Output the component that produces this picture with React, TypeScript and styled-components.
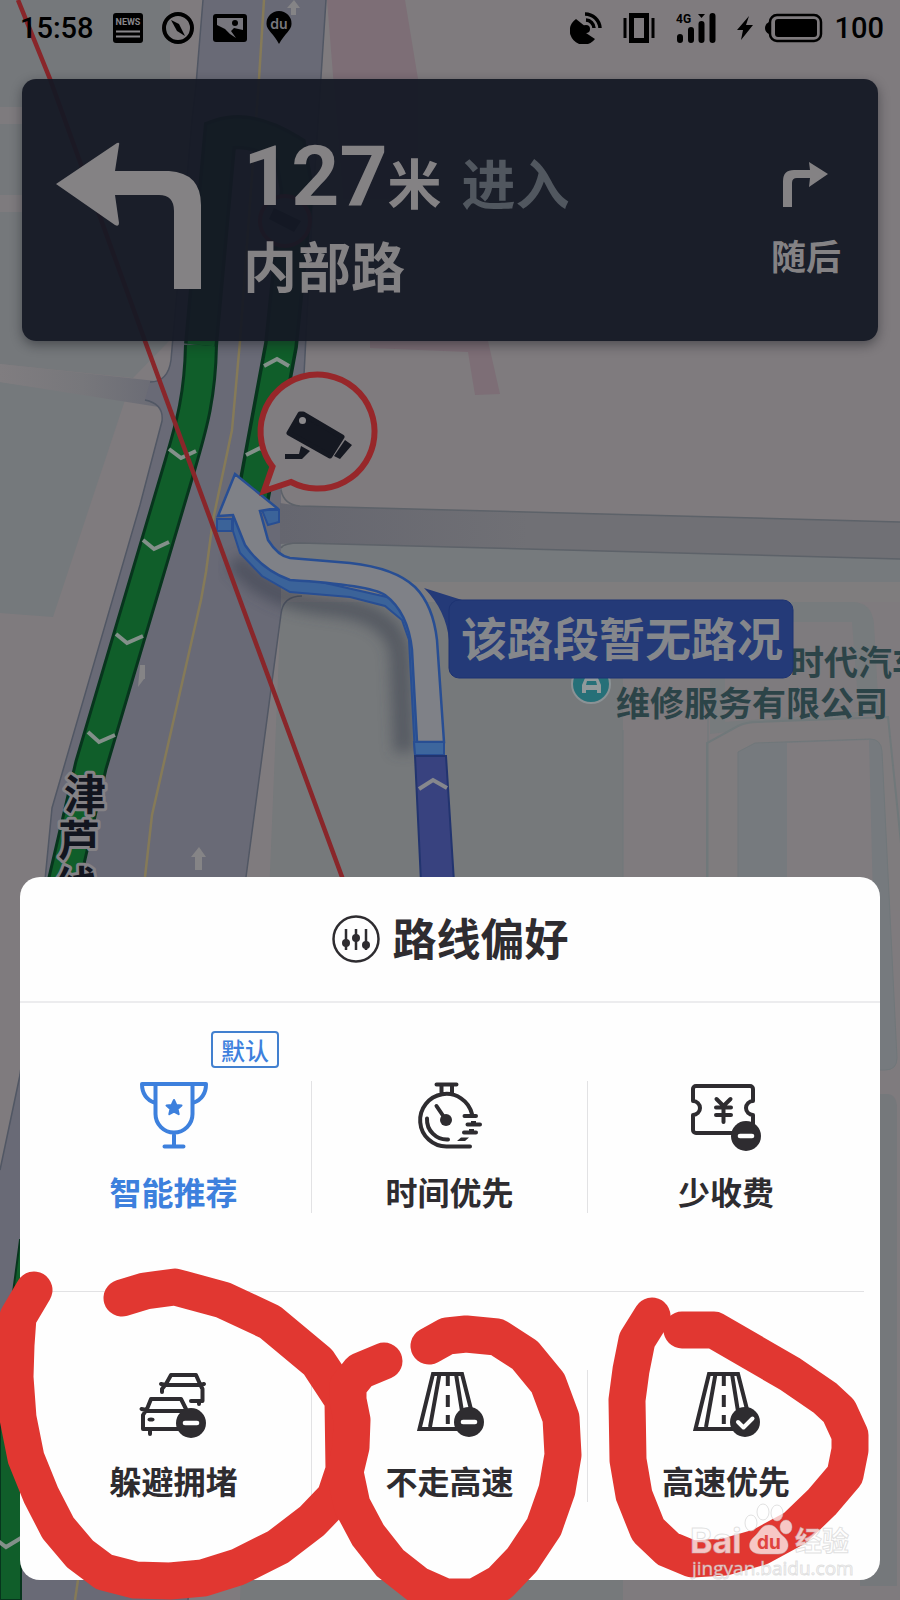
import React from "react";
import styled, { createGlobalStyle } from "styled-components";

const cjk = `"Noto Sans CJK SC", sans-serif`;

const GlobalStyle = createGlobalStyle`
  * { box-sizing: border-box; }
  body { margin: 0; background: #7f7c7f; font-family: Roboto, ${cjk}; }
`;

const Screen = styled.div`
  position: relative;
  display: flex;
  flex-direction: column;
  min-height: 100vh;
  overflow: hidden;
`;

const FullLayer = styled.svg<{ $front?: boolean }>`
  position: absolute;
  inset: 0;
  width: 100%;
  height: 100%;
  pointer-events: none;
  z-index: ${(p) => (p.$front ? 2 : 0)};
`;

const StatusBar = styled.header`
  position: relative;
  z-index: 1;
  display: flex;
  align-items: center;
  justify-content: space-between;
  height: 55px;
  padding: 0 16px 0 20px;
  color: #000;
`;

const StatusGroup = styled.div<{ $gap: number }>`
  display: flex;
  align-items: center;
  gap: ${(p) => p.$gap}px;
`;

const StatusText = styled.span`
  font-size: 29px;
  font-weight: 500;
  line-height: 32px;
`;

const Guidance = styled.section`
  position: relative;
  z-index: 1;
  display: flex;
  align-items: flex-start;
  margin: 24px 22px 0;
  padding: 0 37px 0 33px;
  height: 262px;
  border-radius: 14px;
  background: rgba(20, 24, 36, 0.94);
  box-shadow: 0 4px 12px rgba(20, 22, 28, 0.45);
  color: #848284;
  font-family: ${cjk};
  font-weight: 700;
`;

const TurnIcon = styled.svg`
  flex: none;
  margin-top: 62px;
`;

const GuidanceText = styled.div`
  flex: 1;
  margin: 56px 0 0 40px;
`;

const DistanceLine = styled.div`
  display: flex;
  align-items: baseline;
  height: 98px;
  line-height: 84px;
  font-size: 54px;
`;

const Distance = styled.span`
  font-family: Roboto, sans-serif;
  font-size: 84px;
`;

const Action = styled.span`
  margin-left: 20px;
  color: #51575f;
`;

const RoadName = styled.div`
  font-size: 54px;
  line-height: 64px;
`;

const NextTurn = styled.div`
  display: flex;
  flex-direction: column;
  align-items: center;
  gap: 28px;
  margin-top: 82px;
  font-size: 35px;
  line-height: 40px;
`;

const Sheet = styled.section`
  position: relative;
  z-index: 1;
  margin: auto 20px 20px;
  border-radius: 20px;
  background: #fefefe;
  color: #2e2c30;
  font-family: ${cjk};
`;

const SheetHeader = styled.div`
  display: flex;
  align-items: center;
  justify-content: center;
  gap: 13px;
  height: 126px;
  border-bottom: 2px solid #ececee;
`;

const SheetTitle = styled.h1`
  margin: 0;
  padding-bottom: 4px;
  font-size: 44px;
  font-weight: 700;
  line-height: 60px;
`;

const Options = styled.div`
  display: grid;
  grid-template-columns: repeat(3, 1fr);
  padding: 0 16px;
`;

const Option = styled.button<{ $topRow?: boolean; $selected?: boolean }>`
  position: relative;
  padding: 78px 0;
  border: 0;
  border-bottom: ${(p) => (p.$topRow ? "1px solid #e2e2e4" : "0")};
  background: none;
  color: ${(p) => (p.$selected ? "#3d80dd" : "inherit")};
  font: 700 32px/44px ${cjk};
`;

const OptionBody = styled.span<{ $last?: boolean }>`
  display: flex;
  flex-direction: column;
  align-items: center;
  justify-content: space-between;
  height: 132px;
  border-right: ${(p) => (p.$last ? "0" : "1px solid #e2e2e4")};
`;

const OptionIcon = styled.svg`
  width: 80px;
  height: 70px;
  fill: none;
  stroke: currentColor;
  stroke-width: 4;
  stroke-linecap: round;
  stroke-linejoin: round;
`;

const DefaultBadge = styled.span`
  position: absolute;
  top: 28px;
  right: 33px;
  padding: 0 8px;
  border: 2px solid #4280cf;
  border-radius: 4px;
  background: #fefefe;
  font-size: 24px;
  font-weight: 500;
  line-height: 33px;
`;

const Minus = ({ x, y }: { x: number; y: number }) => (
  <g>
    <circle cx={x} cy={y} r="15" fill="currentColor" stroke="none" />
    <path d={`M${x - 6} ${y}h12`} stroke="#fefefe" strokeWidth="4.6" />
  </g>
);

const Trophy = () => (
  <OptionIcon viewBox="1 0 80 70" aria-hidden>
    <path d="M9 3H73M22.500 3V33a18.500 18.500 0 0 0 37 0V3M9 3c0 10 5 16 13 19M73 3c0 10-5 16-13 19M41 52v13M31.500 65.500h19" />
    <path d="M41 19l2.300 5 5.200.6-3.900 3.500 1.100 5.100-4.700-2.600-4.700 2.600 1.100-5.100-3.900-3.500 5.200-.6z" fill="currentColor" strokeWidth="2" />
  </OptionIcon>
);

const Timer = () => (
  <OptionIcon viewBox="0 0 80 70" aria-hidden>
    <path d="M26.500 3.500h20M31.500 4v9M42 4v9M62 33A26.300 26.300 0 1 0 36.500 65.500H60M17 37.500A20 20 0 0 0 38 58.500M26.500 25L36 39M54.500 35H66M57.500 43.500H70M54 51.500H66" />
    <path d="M61 40h5v3h-5zM59 48h5v3h-5zM47 60l4-3.500h8l-4 3.500z" fill="currentColor" stroke="none" />
    <circle cx="36" cy="39" r="6" fill="currentColor" stroke="none" />
  </OptionIcon>
);

const Ticket = () => (
  <OptionIcon viewBox="0 0 80 70" aria-hidden>
    <path d="M10 5H64a3 3 0 0 1 3 3V20a7 7 0 0 0 0 14V52H10a3 3 0 0 1-3-3V34a7 7 0 0 0 0-14V8a3 3 0 0 1 3-3z" />
    <path d="M30.500 18l7 7 7-7M30 26.500H45M30 34H45M37.500 26V41" />
    <Minus x={60} y={55} />
  </OptionIcon>
);

const Cars = () => (
  <OptionIcon viewBox="1 -1 80 70" aria-hidden>
    <path d="M29 21V18L33 13 38 4H63L67 13 69.500 18V30H58M33 14H67M28 13l5 1M67 14l4-1M66 31v2" />
    <path d="M10 58V44l4-6L18 28H48l5 10M14 40H54M8.500 38l5 1M10 58H46M17 60v3" />
    <ellipse cx="18" cy="48.500" rx="3.500" ry="2" fill="currentColor" stroke="none" />
    <Minus x={58} y={52} />
  </OptionIcon>
);

const Highway = ({ check }: { check?: boolean }) => (
  <OptionIcon viewBox="0 1 80 70" aria-hidden>
    <path d="M23 5H52L66 60H9.500zM29.500 5L20 58M46 5L54.500 58" strokeLinejoin="miter" strokeLinecap="butt" />
    <path d="M37.800 4v13M37.800 26v12M37.800 46v9" strokeLinecap="butt" />
    {check ? (
      <>
        <circle cx="59" cy="53" r="15" fill="currentColor" stroke="none" />
        <path d="M52 53l5.500 5.500 9-9" stroke="#fefefe" />
      </>
    ) : (
      <Minus x={59} y={53} />
    )}
  </OptionIcon>
);

const options = [
  { label: "智能推荐", icon: <Trophy />, selected: true },
  { label: "时间优先", icon: <Timer /> },
  { label: "少收费", icon: <Ticket /> },
  { label: "躲避拥堵", icon: <Cars /> },
  { label: "不走高速", icon: <Highway /> },
  { label: "高速优先", icon: <Highway check /> },
];

const chevrons = [
  "M169 449l12 9 15-7", "M143 540l11 9 15-7", "M116 634l11 9 16-7", "M88 732l11 10 16-7",
  "M264 366l13-7 12 7", "M246 455l14-7 12 7", "M-2 1541l8 6 15-9",
];

const Map = () => (
  <FullLayer viewBox="0 0 900 1600" preserveAspectRatio="xMidYMin slice" aria-label="地图">
    <defs>
      <linearGradient id="side" x1="0" x2="1">
        <stop offset="0" stopColor="#807d80" />
        <stop offset="0.5" stopColor="#77777b" />
        <stop offset="1" stopColor="#696a74" />
      </linearGradient>
      <linearGradient id="junction" x1="0" x2="1">
        <stop offset="0" stopColor="#65666f" />
        <stop offset="0.4" stopColor="#707075" />
        <stop offset="1" stopColor="#707075" />
      </linearGradient>
      <filter id="soft"><feGaussianBlur stdDeviation="7" /></filter>
    </defs>
    <rect width="900" height="1600" fill="#7f7b7e" />
    <path d="M0 0H170V340L133 378 0 364z" fill="#75787b" />
    <path d="M0 107H200V124H0zM0 195H200V212H0z" fill="#7e7b7e" />
    <path d="M0 382l125 18-72 217-53-4z" fill="#75797c" />
    <path d="M327 0h78l13 79v120h-75zM370 341H488l12 53-25 1-7-43-98-4z" fill="#7d6e76" />
    <path d="M0 364L165 382V408L0 382z" fill="url(#side)" />

    <path d="M281 543L450 547 900 559V582H281z" fill="#767a7d" />
    <path d="M281 604L300 596H623V1600H240z" fill="#76797b" />
    <path d="M281 582H900V602H281z" fill="#7f7d7e" />
    <path d="M710 602H852q20 0 22 22l5 90-169 20z" fill="#777b7d" />
    <path d="M725 622H852l7 90-134 10z" fill="#7e7b7e" />
    <path d="M707 900V743l31-17q8-4 20-4l130-5 20 194" fill="#7f7c7e" stroke="#70787a" strokeWidth="2" />
    <path d="M738 900V752l17-9 115-4q11 0 12 12l15 307q0 12-12 12h-20V900" fill="#767a7e" stroke="#70777a" />
    <path d="M787 743l82-3 4 160h-86z" fill="#807c7f" />
    <path d="M623 730V877M708 690v187" stroke="#70787a" />
    <path d="M860 1094h27q9 0 10 12v480H860z" fill="#75787b" />

    <path d="M203 0L196 85 192 120 171 360Q168 382 150 382L145 400Q164 404 162 421L140 505 52 808 45 880 20 1075 0 1170V1600H188L246 877 281 614 281 494 304 375 313 200 326 0z" fill="#696a76" />
    <path d="M203 0L196 85 192 120 171 360Q168 382 150 382M145 400Q164 404 162 421L140 505 52 808 45 880 20 1075 0 1170M188 1600L246 877 281 614Q283 596 302 596M326 0L313 200 304 375" fill="none" stroke="#515764" strokeWidth="1.500" />
    <path d="M280 503L300 506 450 510 900 522V559L450 547 300 543 280 544z" fill="url(#junction)" />
    <path d="M281 490Q284 505 300 506L450 510 900 522M281 548Q284 543 300 543L450 547 900 559" fill="none" stroke="#5d6269" strokeWidth="1.500" />
    <path d="M264 0L259 79 240 341 232 430 213 520 206 572 201 600 152 815 145 877M78 1580l-3 20" fill="none" stroke="#857a58" strokeWidth="2.500" />
    <g fill="#858486">
      <path d="M294 0l6 8h-4v7h-5V8h-4zM140 665h5v14h-1l-6 8zM199 847l7 10h-4v13h-7v-13h-4z" />
    </g>

    <path d="M201 345C200 400 190 430 180 465L91 765 62 890" fill="none" stroke="#07351d" strokeWidth="34" />
    <path d="M201 345C200 400 190 430 180 465L91 765 62 890" fill="none" stroke="#105e2a" strokeWidth="28" />
    <path d="M201 345L220 135Q250 125 290 150L297 190 281 345 252 502" fill="none" stroke="#07351d" strokeWidth="34" />
    <path d="M201 345L220 135Q250 125 290 150L297 190 281 345 252 502" fill="none" stroke="#105e2a" strokeWidth="27" />
    <path d="M20 1240L0 1390V1600H21V1240z" fill="#105e2a" stroke="#07351d" strokeWidth="2" />
    <path d={chevrons.join("")} fill="none" stroke="#83908a" strokeWidth="4" />

    <path d="M235 560Q265 600 330 606T400 655L404 752" fill="none" stroke="#363b48" strokeWidth="20" opacity="0.5" filter="url(#soft)" />
    <path d="M233 515V531L240 553 262 576 290 592 350 597 385 606 402 620 409 640 415 755H430V640L400 600 290 575 255 555z" fill="#3b6399" stroke="#284e93" strokeWidth="2" />
    <path d="M217 519H232V531H217zM262 510H279V522L268 525z" fill="#3b6399" stroke="#284e93" strokeWidth="2" />
    <path d="M235 474L277 508 260 511 268 540Q278 556 290 558L350 563Q395 568 415 587 433 605 437 640L444 742H417L412 650Q408 612 385 595 370 585 290 580 262 570 245 545L233 515 218 516z" fill="#7f8187" stroke="#284e93" strokeWidth="2.500" />
    <path d="M414 742H444V755H415z" fill="#3d669d" stroke="#284e93" strokeWidth="2" />
    <path d="M415 756H446L454 882H421z" fill="#38427f" stroke="#22346f" strokeWidth="2" />
    <path d="M419 789l14-9 14 8" fill="none" stroke="#86878d" strokeWidth="4" />

    <path d="M18 0L50 79 145 341 240 600 345 885" fill="none" stroke="#89262a" strokeWidth="4.500" />
    <g>
      <circle cx="285" cy="221" r="25" fill="#555b68" stroke="#8c2630" strokeWidth="4" />
      <path d="M274 208l27 13-7 11-25-13z" fill="#111827" />
    </g>
    <path d="M272.500 466.500A57 57 0 1 1 291 482L264 491z" fill="#807d80" stroke="#97272a" strokeWidth="6" />
    <path d="M303 414L342 437 330 456 289 433 300 414z" fill="#151821" stroke="#151821" strokeWidth="5" strokeLinejoin="round" />
    <circle cx="302.500" cy="420.500" r="3.500" fill="#8b898c" />
    <path d="M345 440l7 5-12 14-6-3zM301 446l9 5-8 8h-17v-5h14z" fill="#151821" />

    <path d="M424 588L462 600V636L449 640Q446 610 424 588z" fill="#243a78" />
    <g fontFamily={cjk} fontWeight="700" fontSize="34" fill="#2c4448">
      <text x="790" y="675">时代汽车</text>
      <text x="616" y="716">维修服务有限公司</text>
    </g>
    <circle cx="591" cy="684" r="19" fill="#267078" stroke="#8b9295" strokeWidth="2" />
    <path d="M582 693v-8l3-7h13l3 7v8h-4v-3H586v3zM587 681l-1 4h11l-1-4z" fill="#91999b" fillRule="evenodd" />
    <rect x="449" y="600" width="344" height="78" rx="10" fill="#243a78" stroke="#1d3372" />
    <text x="461" y="656" fontFamily={cjk} fontWeight="700" fontSize="46" fill="#85878b">该路段暂无路况</text>

    <g fontFamily={cjk} fontWeight="700" fontSize="42" fill="#12151f" stroke="#848286" strokeWidth="6" strokeLinejoin="round" paintOrder="stroke" textAnchor="middle">
      <text x="85" y="810">津</text>
      <text x="79" y="856">芦</text>
      <text x="76" y="902">线</text>
    </g>
  </FullLayer>
);

const Annotations = () => (
  <FullLayer $front viewBox="0 0 900 1600" preserveAspectRatio="xMidYMax slice" aria-hidden>
    <g fill="none" stroke="#e13731" strokeWidth="37" strokeLinecap="round" strokeLinejoin="round">
      <path d="M34 1290L18 1317 16 1345 15 1377 18 1418 26 1458 41 1495 58 1528 80 1554 104 1572 135 1580 170 1581 203 1578 238 1567 278 1547 312 1521 335 1497 344 1470 343 1400 318 1362 270 1322 223 1300 175 1287 145 1291 122 1298" />
      <path d="M384 1361L360 1371 348 1386 348 1400 352 1420 351 1447 345 1472 352 1505 368 1535 390 1563 418 1585 445 1597 475 1597 500 1583 522 1560 544 1527 557 1490 563 1455 561 1418 548 1383 525 1355 497 1337 466 1334 447 1336 429 1346" />
      <path d="M652 1316L637 1340 631 1370 627 1400 628 1460 634 1495 648 1530 668 1549 692 1559 725 1557 760 1547 795 1528 822 1502 845 1475 850 1450 850 1435 839 1411 825 1398 790 1374 714 1330 682 1330" />
    </g>
    <g fill="#fff" fillOpacity="0.72" stroke="#bdbdbd" strokeOpacity="0.45" strokeWidth="1">
      <text x="690" y="1553" fontFamily="Inter, sans-serif" fontWeight="700" fontSize="34">Bai</text>
      <ellipse cx="751" cy="1523" rx="6" ry="8" />
      <ellipse cx="763" cy="1512" rx="6" ry="8" />
      <ellipse cx="777" cy="1513" rx="6" ry="8" />
      <ellipse cx="786" cy="1527" rx="6" ry="7" />
      <path d="M769 1525c8 0 9 8 15 12 7 6 5 17-6 17H761c-12 0-15-10-7-17 6-5 7-12 15-12z" />
      <text x="795" y="1551" fontFamily={cjk} fontWeight="700" fontSize="27">经验</text>
      <text x="692" y="1575" fontFamily="Open Sans, sans-serif" fontSize="19">jingyan.baidu.com</text>
    </g>
    <text x="757" y="1549" fontFamily="Inter, sans-serif" fontWeight="700" fontSize="19" fill="#e0443e">du</text>
  </FullLayer>
);

export default function App() {
  return (
    <>
      <GlobalStyle />
      <Screen>
        <Map />
        <StatusBar>
          <StatusGroup $gap={19}>
            <StatusText>15:58</StatusText>
            <svg width="30" height="30" viewBox="0 0 30 30" aria-hidden>
              <rect width="30" height="30" rx="3" />
              <text x="15" y="12" textAnchor="middle" fontSize="9" fontWeight="700" fill="#88868a" fontFamily="Roboto, sans-serif">NEWS</text>
              <path d="M3 18.500h24M3 23.500h24" stroke="#88868a" strokeWidth="2" />
            </svg>
            <svg width="32" height="32" viewBox="0 0 32 32" aria-hidden>
              <circle cx="16" cy="16" r="14" fill="none" stroke="#000" strokeWidth="4" />
              <path d="M9 8l8 4 6 12-8-5z" />
            </svg>
            <svg width="34" height="28" viewBox="0 0 34 28" aria-hidden>
              <rect width="34" height="28" rx="3" />
              <path d="M4 4h26v12l-9-2-3 3 5 7-6-4-5-5-8-4z" fill="#77767d" />
              <circle cx="22" cy="9" r="3" />
            </svg>
            <svg width="26" height="33" viewBox="0 0 26 33" aria-hidden>
              <path d="M13 0a12.500 12.500 0 0 1 12.500 13c0 6-7 10-12.500 20C8 23 .5 19 .5 13A12.500 12.500 0 0 1 13 0z" />
              <text x="13" y="18" textAnchor="middle" fontSize="14" fontWeight="600" fill="#77767d" fontFamily="Inter, sans-serif">du</text>
            </svg>
          </StatusGroup>
          <StatusGroup $gap={12}>
            <StatusGroup $gap={21}>
              <svg width="32" height="32" viewBox="0 0 32 32" aria-hidden>
                <path d="M6 7L16 15l3 3-3 3 9 6A14 14 0 1 1 6 7z" />
                <circle cx="16" cy="17" r="4" />
                <path d="M16 8a8.500 8.500 0 0 1 8 8M15 2a15 15 0 0 1 15 14" fill="none" stroke="#000" strokeWidth="3.500" />
              </svg>
              <svg width="32" height="32" viewBox="0 0 32 32" aria-hidden>
                <path d="M6 1h20v30H6zM11 6v20h10V6z" fillRule="evenodd" />
                <path d="M2 6v20M30 6v20" stroke="#000" strokeWidth="3" />
              </svg>
              <svg width="40" height="32" viewBox="0 0 40 32" aria-hidden>
                <text x="0" y="11" fontSize="12" fontWeight="700" fontFamily="Roboto, sans-serif">4G</text>
                <path d="M4 25v3M15 18v10M25.500 12v16M36.500 4v24" stroke="#000" strokeWidth="6" strokeLinecap="round" />
                <path d="M22 2h7l-3.500 4z" />
              </svg>
              <svg width="16" height="24" viewBox="0 0 16 24" aria-hidden>
                <path d="M12 0L0 14h6L4 24 16 9H9z" />
              </svg>
            </StatusGroup>
            <svg width="58" height="30" viewBox="0 0 58 30" aria-hidden>
              <rect x="5" y="2" width="51" height="26" rx="7" fill="none" stroke="#000" strokeWidth="2.500" />
              <rect x="10" y="6" width="42" height="18" rx="3" />
              <path d="M4 9v12Q0 19 0 15t4-6z" />
            </svg>
            <StatusText>100</StatusText>
          </StatusGroup>
        </StatusBar>

        <Guidance>
          <TurnIcon width="148" height="150" viewBox="0 0 148 150" fill="#848284" aria-hidden>
            <path d="M1 43L62 2q3-1 2 2L60 30H114q32 2 32 34v84H119V70q0-16-15-16H60l4 28q0 4-4 2z" />
          </TurnIcon>
          <GuidanceText>
            <DistanceLine>
              <Distance>127</Distance>米<Action>进入</Action>
            </DistanceLine>
            <RoadName>内部路</RoadName>
          </GuidanceText>
          <NextTurn>
            <svg width="46" height="46" viewBox="0 0 46 46" fill="#848284" aria-hidden>
              <path d="M0 46V20Q0 9 11 9H27L26 1 45 13 26 26 27 17H14Q9 17 9 22V46z" />
            </svg>
            随后
          </NextTurn>
        </Guidance>

        <Sheet>
          <SheetHeader>
            <svg width="48" height="48" viewBox="0 0 48 48" fill="none" stroke="currentColor" strokeWidth="2.500" aria-hidden>
              <circle cx="24" cy="24" r="22.500" />
              <path d="M14 14v21M24 14v21M34 14v21" />
              <g fill="currentColor" stroke="none">
                <circle cx="14" cy="28" r="4" />
                <circle cx="24" cy="23" r="4" />
                <circle cx="34" cy="30" r="4" />
              </g>
            </svg>
            <SheetTitle>路线偏好</SheetTitle>
          </SheetHeader>
          <Options>
            {options.map((o, i) => (
              <Option key={o.label} type="button" aria-pressed={!!o.selected} $selected={o.selected} $topRow={i < 3}>
                {o.selected && <DefaultBadge>默认</DefaultBadge>}
                <OptionBody $last={i % 3 === 2}>
                  {o.icon}
                  {o.label}
                </OptionBody>
              </Option>
            ))}
          </Options>
        </Sheet>
        <Annotations />
      </Screen>
    </>
  );
}
